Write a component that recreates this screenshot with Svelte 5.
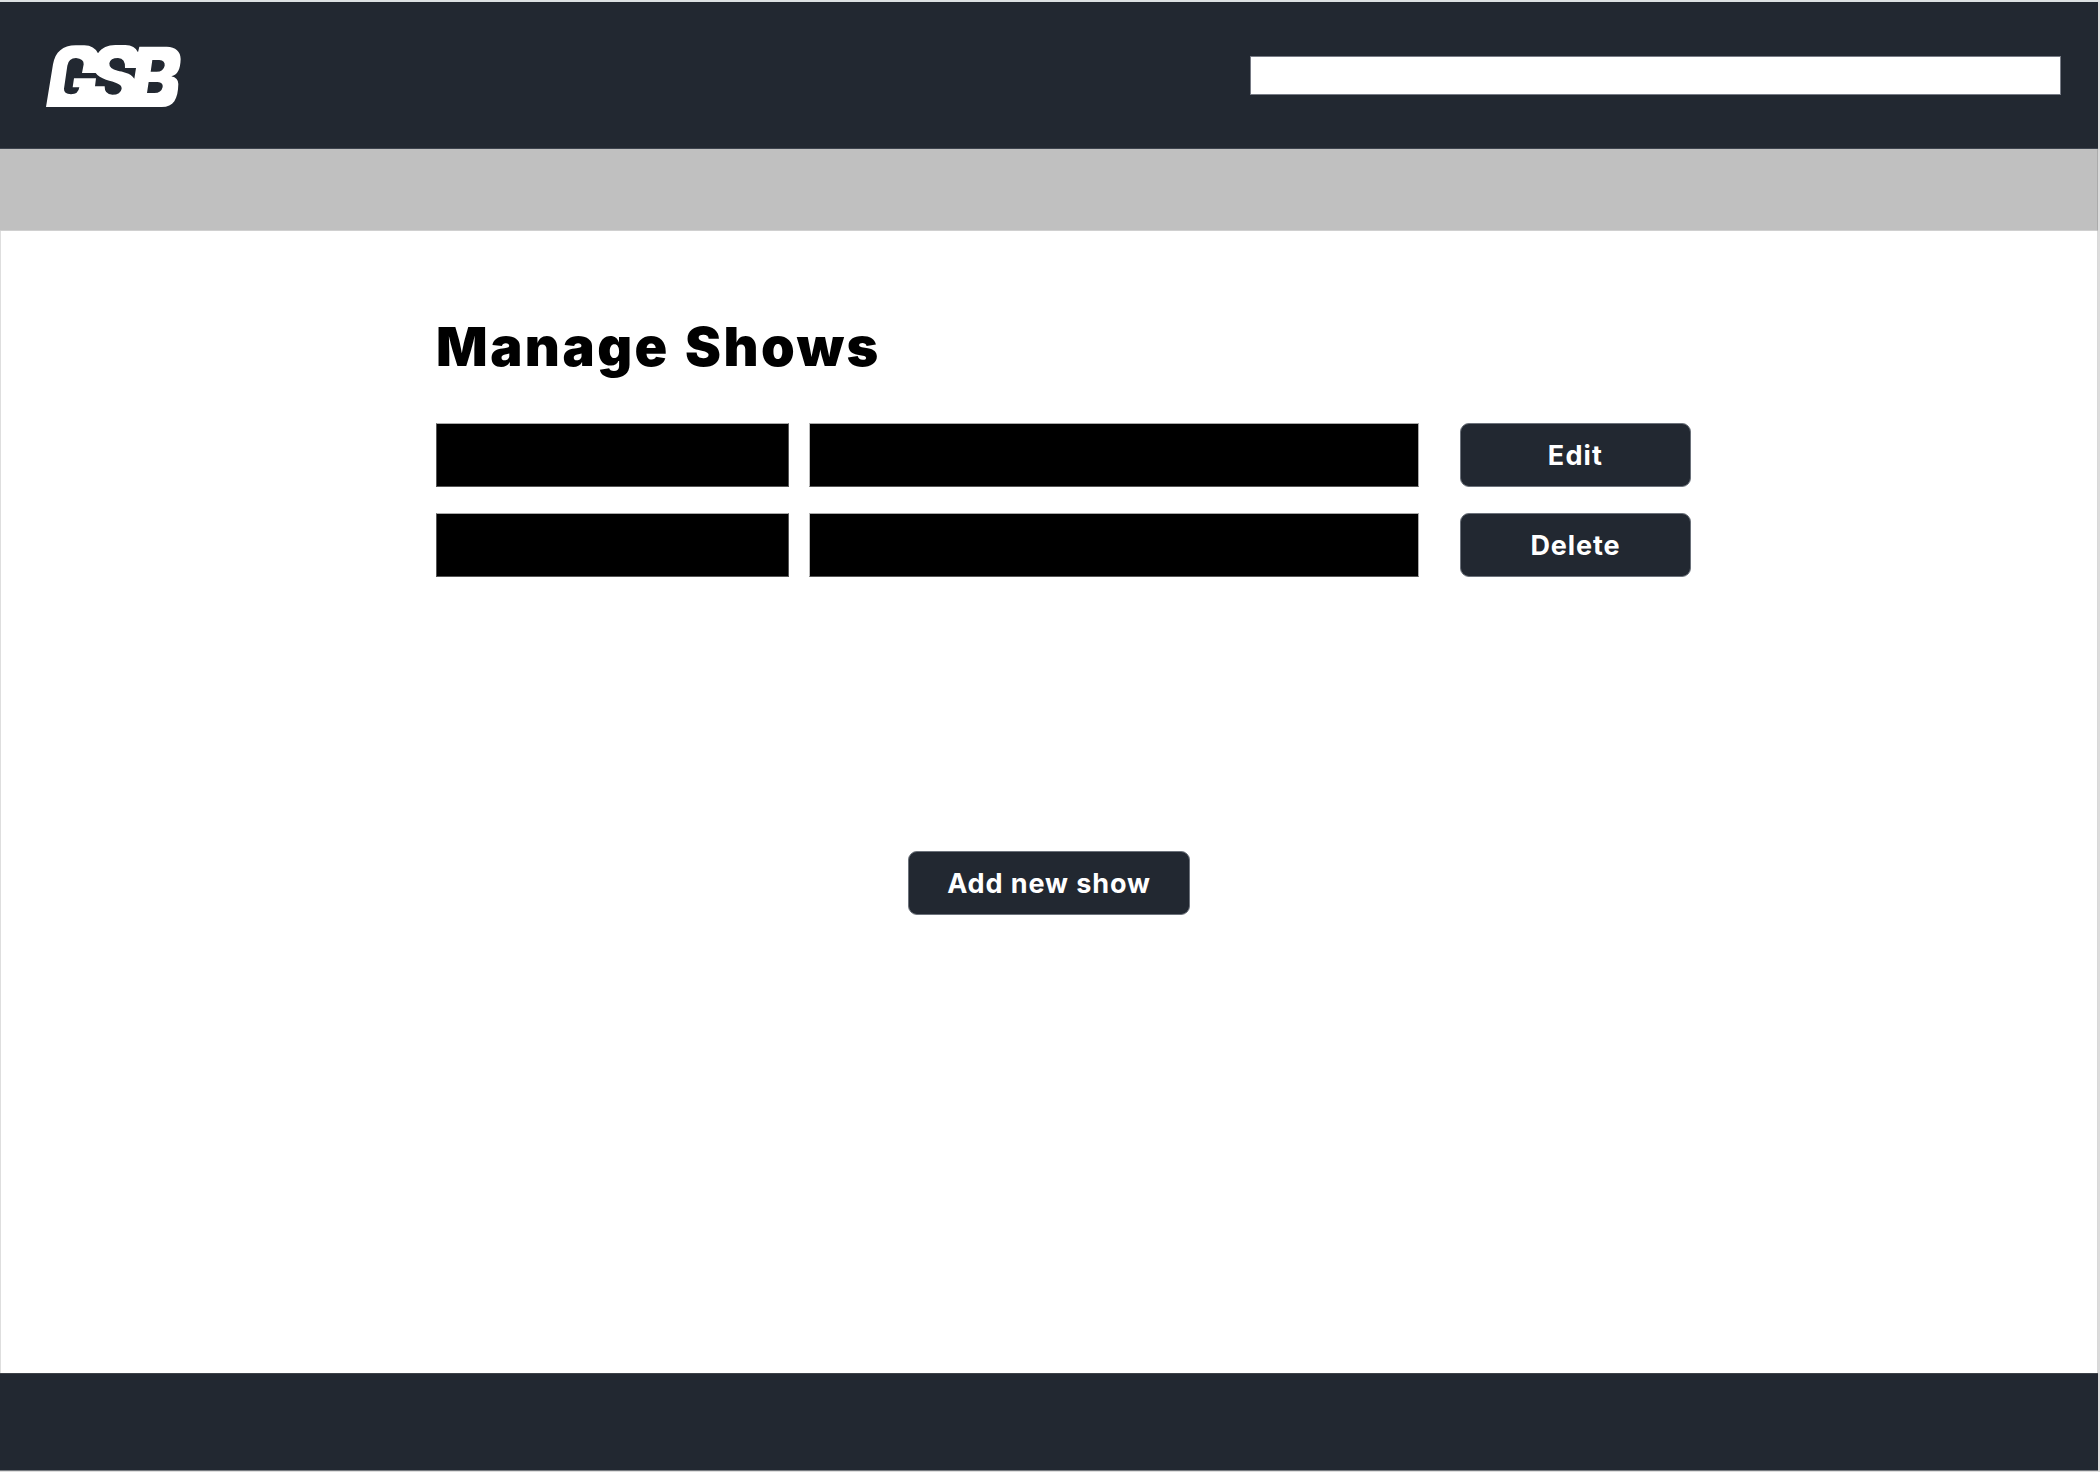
<script>
  const rows = ['Edit', 'Delete'];
</script>

<div class="page">
  <header>
    <svg class="logo" viewBox="0 0 510 270" role="img" aria-label="GSB">
      <path
        fill="#fff"
        fill-rule="evenodd"
        d="M48 231 L69 103 C76 66 98 46 137 46 L163 46 Q193 47 204 70 C216 52 233 46 256 45 L286 45 Q315 46 324 67 L328 50 L410 50 Q451 52 452 87 C451 119 443 134 424 139 Q445 144 445 162 C444 207 431 231 395 231 Z
        M112 107 Q116 84 138 84 Q162 86 161 103 L156 129 L197 129 Q206 141 228 149 C255 157 276 161 275 176 Q272 194 247 194 Q223 193 224 169 L195 169 L198 145 L132 145 L128 172 L148 172 Q145 193 123 193 Q101 191 102 176 Z
        M238 100 Q241 84 264 84 Q287 86 285 114 L318 114 L313 146 C302 128 276 125 263 122 Q237 117 238 100 Z
        M367 90 L388 90 Q406 92 404 107 Q400 125 380 125 L362 125 Z
        M356 156 L383 156 Q400 158 398 171 Q394 189 373 189 L351 189 Z"
      />
    </svg>
    <div class="search"></div>
  </header>
  <nav></nav>
  <main>
    <h1><span class="manage">Manage</span><span class="shows">Shows</span></h1>
    <div class="list">
      {#each rows as label}
        <div class="row">
          <div class="name"></div>
          <div class="detail"></div>
          <button class={label.toLowerCase()}><span>{label}</span></button>
        </div>
      {/each}
    </div>
    <button class="add"><span>Add new show</span></button>
  </main>
  <footer></footer>
</div>

<style>
  :global(body) {
    background: #fff;
  }
  .page {
    box-sizing: border-box;
    width: 2100px;
    height: 1472px;
    display: flex;
    flex-direction: column;
    border-top: 2px solid #dde1e2;
    border-right: 2px solid #dcdcdc;
    border-bottom: 1px solid #dedede;
    font-family: Inter, 'Open Sans', sans-serif;
  }
  header {
    box-sizing: border-box;
    height: 147px;
    flex: none;
    display: flex;
    justify-content: space-between;
    align-items: flex-start;
    padding: 28px 37px 0 30px;
    background: #222831;
    border-bottom: 1px solid #3e444e;
  }
  .logo {
    width: 170px;
    height: 90px;
  }
  .search {
    box-sizing: border-box;
    width: 811px;
    height: 39px;
    margin-top: 26px;
    background: #fff;
    border: 1px solid #777b85;
  }
  nav {
    box-sizing: border-box;
    height: 82px;
    flex: none;
    background: #c0c0c0;
    border-right: 1px solid #aaa;
    border-bottom: 1px solid #d0d0d0;
  }
  main {
    box-sizing: border-box;
    flex: 1;
    display: flex;
    flex-direction: column;
    padding: 86px 0 0 435px;
    border-left: 1px solid #dedede;
    border-right: 1px solid #d8d8d8;
  }
  h1 {
    margin: 0;
    height: 60px;
    display: flex;
    gap: 18px;
    font-size: 54px;
    line-height: 60px;
    font-weight: 900;
    letter-spacing: 2.5px;
    white-space: nowrap;
  }
  .manage {
    width: 231px;
  }
  .list {
    display: flex;
    flex-direction: column;
    gap: 26px;
    margin-top: 46px;
  }
  .row {
    display: flex;
    height: 64px;
  }
  .name,
  .detail {
    box-sizing: border-box;
    width: 353px;
    background: #000;
    border: 1px solid #555;
    border-top-color: #aaa;
  }
  .detail {
    width: 610px;
    margin-left: 20px;
    border-left-color: #bbb;
    border-right-color: #aaa;
  }
  button {
    box-sizing: border-box;
    width: 231px;
    height: 64px;
    padding: 2px 0 0;
    border: 1px solid #6c727b;
    border-radius: 9px;
    background: #222831;
    color: #fff;
    font: 700 27px/60px Inter, 'Open Sans', sans-serif;
    letter-spacing: 0.9px;
    white-space: nowrap;
  }
  .row button {
    margin-left: 41px;
  }
  .edit {
    letter-spacing: 1.2px;
  }
  .add {
    width: 282px;
    margin: 274px 0 0 472px;
  }
  footer {
    box-sizing: border-box;
    height: 98px;
    flex: none;
    background: #222831;
    border-top: 1px solid #3e4248;
    border-bottom: 1px solid #777b80;
  }
</style>
